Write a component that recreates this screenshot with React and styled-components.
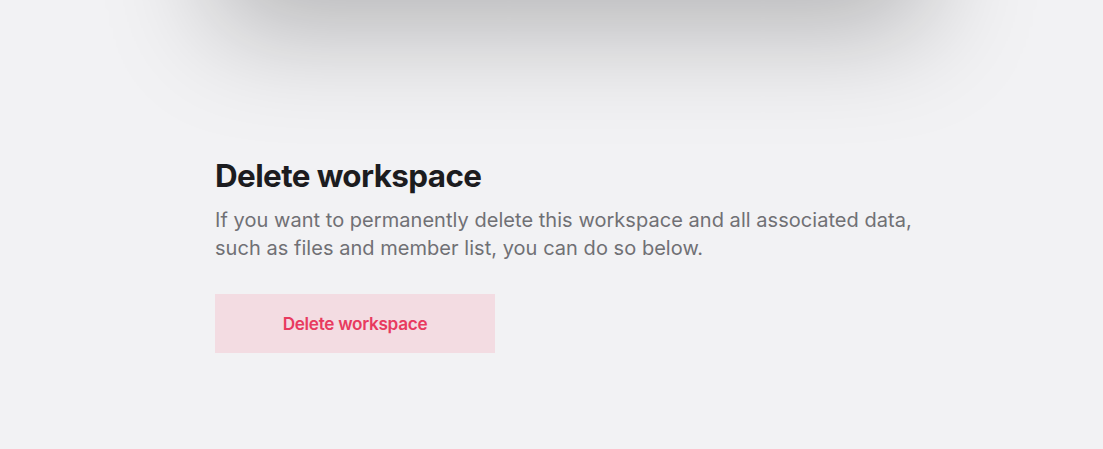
import React from 'react'
import styled, { createGlobalStyle } from 'styled-components'

const GlobalStyle = createGlobalStyle`
    html, body {
        margin: 0;
        padding: 0;
        background: #f2f2f4;
        font-family: Inter, "Noto Sans", sans-serif;
        overflow: hidden;
    }
`;

const Page = styled.div`
    display: flex;
    justify-content: flex-start;
    width: 100%;
    height: 449px;
    padding-left: 215px;
    box-sizing: border-box;
    background: #f2f2f4;
`;

const Column = styled.div`
    display: flex;
    flex-direction: column;
    width: 712px;
`;

const ShadowCard = styled.div`
    height: 220px;
    margin-top: -250px;
    background: #f2f2f4;
    border-radius: 16px;
    box-shadow: 0 60px 110px rgba(0, 0, 0, 0.26);
`;

const Section = styled.section`
    display: flex;
    flex-direction: column;
    align-items: flex-start;
    padding-top: 188px;
`;

const Title = styled.h2`
    margin: 0;
    font-size: 31.4px;
    font-weight: 700;
    letter-spacing: -0.6px;
    line-height: 36px;
    color: #1c1c1f;
`;

const Description = styled.p`
    margin: 12px 0 0;
    font-size: 20px;
    letter-spacing: 0.04px;
    line-height: 28px;
    color: #707074;
`;

const DangerButton = styled.button`
    margin-top: 32px;
    width: 280px;
    height: 59px;
    border: none;
    background: #f3dce2;
    color: #e83a5f;
    font-family: Inter, sans-serif;
    font-size: 17.2px;
    font-weight: 600;
    letter-spacing: -0.3px;
    cursor: pointer;
`;

const App = () => {
    return (
        <Page>
            <GlobalStyle />
            <Column>
                <ShadowCard />
                <Section>
                    <Title>Delete workspace</Title>
                    <Description>
                        If you want to permanently delete this workspace and all associated data,
                        <br />
                        such as files and member list, you can do so below.
                    </Description>
                    <DangerButton>Delete workspace</DangerButton>
                </Section>
            </Column>
        </Page>
    )
}

export default App
